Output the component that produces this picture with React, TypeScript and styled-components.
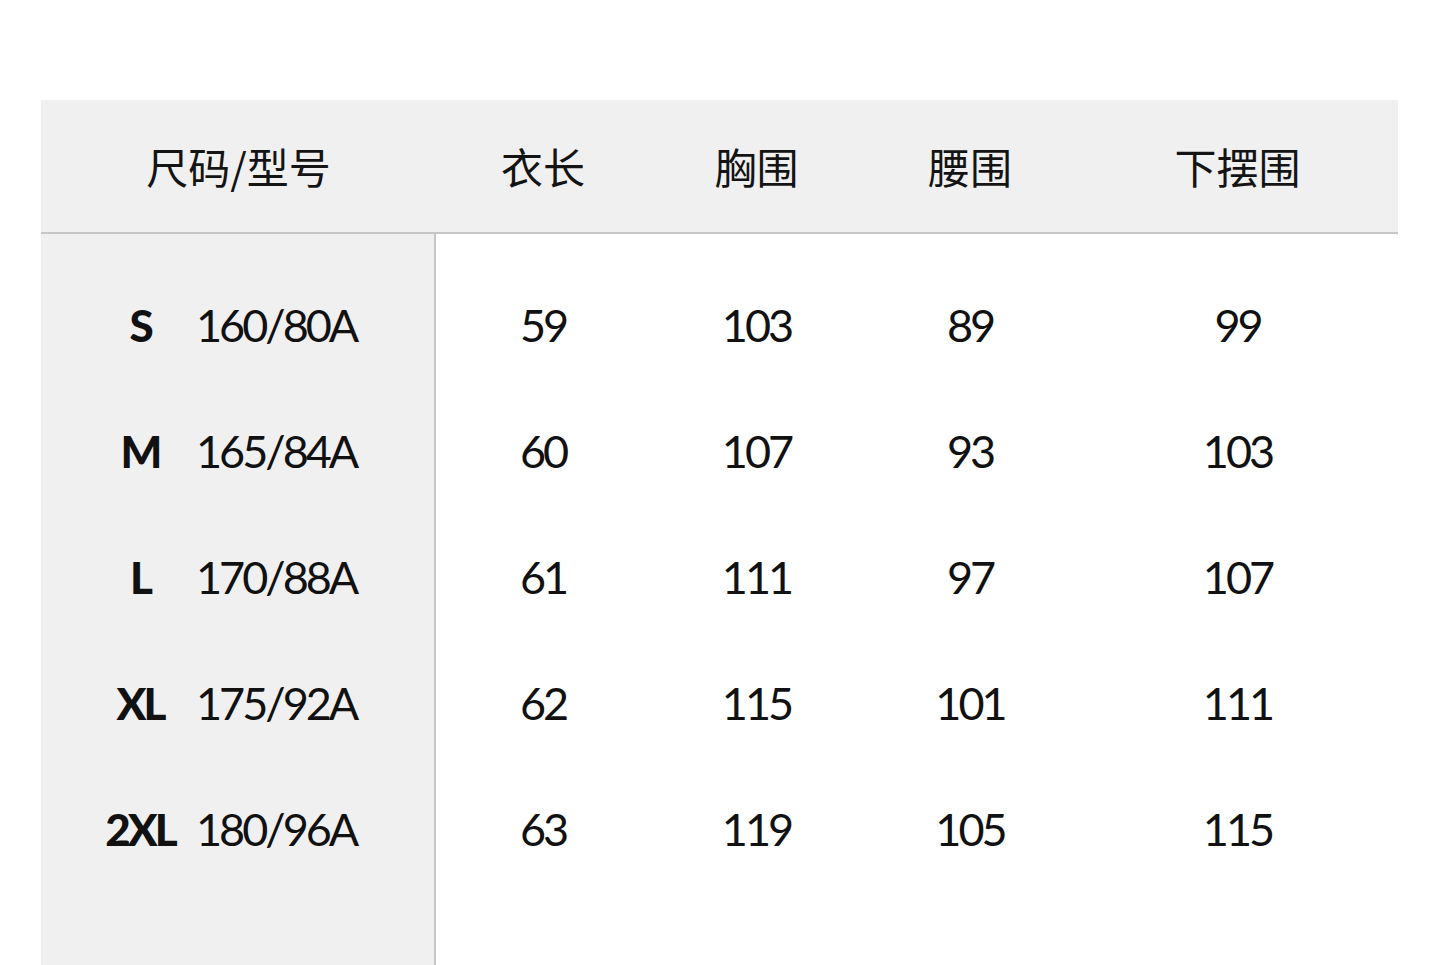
import styled, { createGlobalStyle } from 'styled-components';

const GlobalStyle = createGlobalStyle`
  html, body {
    margin: 0;
    padding: 0;
    background: #ffffff;
  }
  body {
    font-family: 'Lato', 'Noto Sans CJK SC', sans-serif;
    color: #111111;
  }
`;

const Page = styled.div`
  padding: 100px 42px 0 41px;
  height: 965px;
  box-sizing: border-box;
  overflow: hidden;
`;

const Table = styled.div`
  display: grid;
  grid-template-columns: 395px 214px 213px 214px 1fr;
  grid-template-rows: 134px 1fr;
  height: 865px;
`;

const HeadCell = styled.div`
  background: #f0f0f0;
  border-bottom: 2px solid #c6c6c6;
  display: flex;
  align-items: center;
  justify-content: center;
  font-family: 'Noto Sans CJK SC', sans-serif;
  font-size: 42px;
  font-weight: 400;
  color: #141414;
  padding-bottom: 2px;
`;

const SizeColumn = styled.div`
  background: #f0f0f0;
  border-right: 2px solid #c6c6c6;
  padding-top: 28px;
`;

const DataColumn = styled.div`
  padding-top: 28px;
`;

const Cell = styled.div`
  height: 126px;
  display: flex;
  align-items: center;
  justify-content: center;
  font-family: 'Lato', sans-serif;
  font-weight: 400;
  font-size: 45px;
  letter-spacing: -3px;
  color: #111111;
`;

const SizeRow = styled.div`
  height: 126px;
  display: grid;
  grid-template-columns: 43px 80px 1fr;
  column-gap: 16px;
  align-items: center;
`;

const SizeLabel = styled.span`
  grid-column: 2;
  text-align: center;
  font-family: 'Lato', sans-serif;
  font-weight: 900;
  font-size: 44px;
  letter-spacing: -3px;
`;

const SizeSpec = styled.span`
  font-family: 'Lato', sans-serif;
  font-weight: 400;
  font-size: 45px;
  letter-spacing: -3px;
`;

const headers = ['尺码/型号', '衣长', '胸围', '腰围', '下摆围'];

const rows = [
  { size: 'S', spec: '160/80A', values: ['59', '103', '89', '99'] },
  { size: 'M', spec: '165/84A', values: ['60', '107', '93', '103'] },
  { size: 'L', spec: '170/88A', values: ['61', '111', '97', '107'] },
  { size: 'XL', spec: '175/92A', values: ['62', '115', '101', '111'] },
  { size: '2XL', spec: '180/96A', values: ['63', '119', '105', '115'] },
];

export default function App() {
  return (
    <>
      <GlobalStyle />
      <Page>
        <Table>
          {headers.map((h) => (
            <HeadCell key={h}>{h}</HeadCell>
          ))}
          <SizeColumn>
            {rows.map((r) => (
              <SizeRow key={r.size}>
                <SizeLabel>{r.size}</SizeLabel>
                <SizeSpec>{r.spec}</SizeSpec>
              </SizeRow>
            ))}
          </SizeColumn>
          {[0, 1, 2, 3].map((col) => (
            <DataColumn key={col}>
              {rows.map((r) => (
                <Cell key={r.size}>{r.values[col]}</Cell>
              ))}
            </DataColumn>
          ))}
        </Table>
      </Page>
    </>
  );
}
